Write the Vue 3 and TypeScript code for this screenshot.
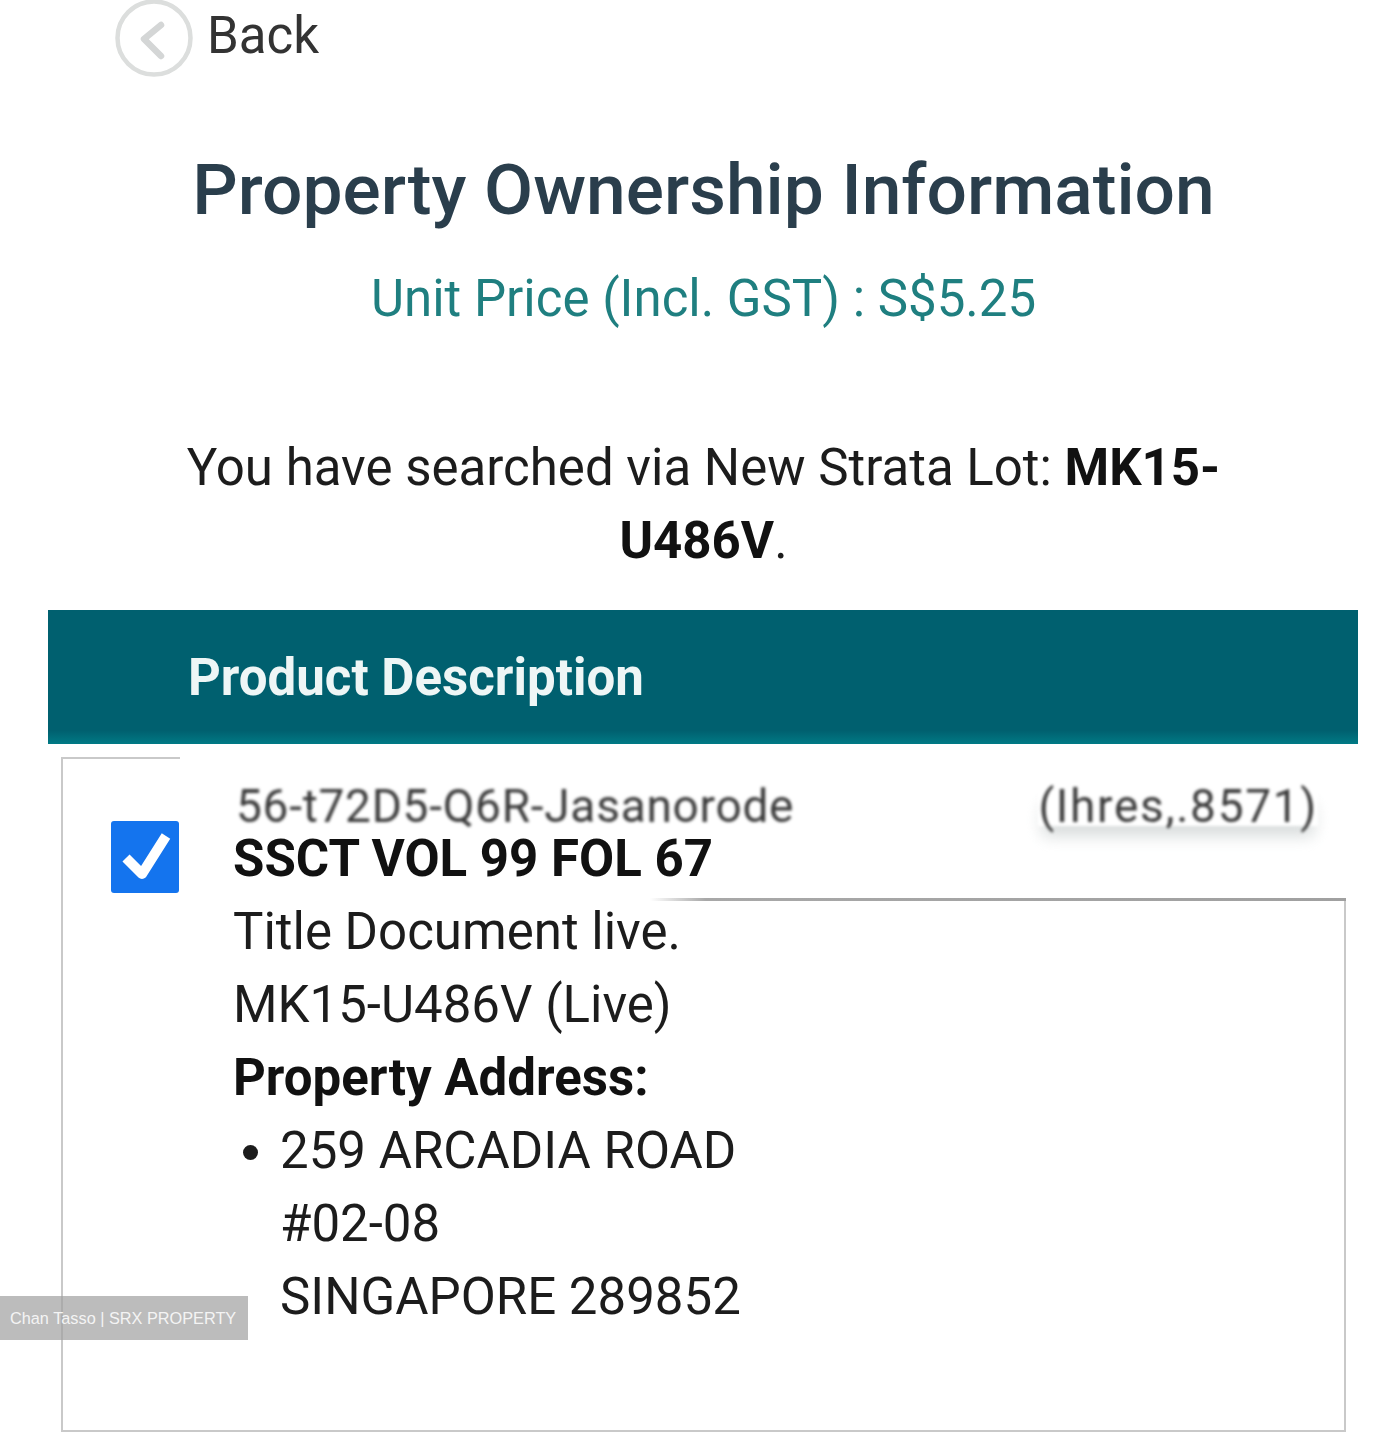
<script setup lang="ts">
const lines: string[] = ['Title Document live.', 'MK15-U486V (Live)']
const address: string[] = ['259 ARCADIA ROAD', '#02-08', 'SINGAPORE 289852']
</script>

<template>
  <div class="page">
    <div class="back">
      <svg class="back-icon" width="78" height="78" viewBox="0 0 78 78" fill="none">
        <circle cx="39" cy="38" r="36.5" stroke="#dcdedd" stroke-width="4.5" />
        <path d="M46 25 L29 39 L46 56" stroke="#d4d6d6" stroke-width="6.5" stroke-linecap="round" stroke-linejoin="round" />
      </svg>
      <span class="back-label">Back</span>
    </div>

    <h1 class="title">Property Ownership Information</h1>
    <p class="price">Unit Price (Incl. GST) : S$5.25</p>
    <p class="searched">You have searched via New Strata Lot: <b>MK15-<br />U486V</b>.</p>

    <div class="banner">Product Description</div>

    <div class="box">
      <div class="patch"></div>
      <div class="rule"></div>
      <div class="check">
        <svg width="68" height="72" viewBox="0 0 68 72" fill="none">
          <path d="M15 37 L31 53 L55 15" stroke="#fff" stroke-width="10" stroke-linejoin="round" />
        </svg>
      </div>
      <div class="content">
        <div class="blur-row">
          <span class="ref">56-t72D5-Q6R-Jasanorode</span>
          <span class="hits">(Ihres,.8571)</span>
        </div>
        <div class="line strong">SSCT VOL 99 FOL 67</div>
        <div v-for="l in lines" :key="l" class="line">{{ l }}</div>
        <div class="line strong">Property Address:</div>
        <ul class="address">
          <li>
            <div v-for="a in address" :key="a" class="line">{{ a }}</div>
          </li>
        </ul>
      </div>
    </div>

    <div class="watermark">Chan Tasso | SRX PROPERTY</div>
  </div>
</template>

<style>
html, body { margin: 0; background: #fff; }
</style>

<style scoped>
.page {
  position: relative;
  width: 1396px;
  height: 1440px;
  overflow: hidden;
  background: #fff;
  font-family: Roboto, "Liberation Sans", sans-serif;
  color: #1c1c1c;
}
.back {
  display: flex;
  align-items: center;
  gap: 15px;
  height: 78px;
  padding-left: 115px;
}
.back-icon { flex: none; filter: blur(0.6px); }
.back-label {
  font-size: 51px;
  line-height: 72px;
  margin-bottom: 6px;
  margin-left: -1px;
  color: #333;
}
.title {
  margin: 72px 0 0;
  padding-left: 11px;
  font-size: 71.3px;
  line-height: 80px;
  font-weight: 500;
  color: #2a3e4c;
  text-align: center;
}
.price {
  margin: 39px 0 0;
  padding-left: 11px;
  font-size: 51px;
  line-height: 60px;
  color: #1f7f80;
  text-align: center;
}
.searched {
  margin: 102px 0 0;
  padding-left: 11px;
  font-size: 51px;
  line-height: 73px;
  text-align: center;
}
.searched b { font-weight: 700; color: #111; }
.banner {
  margin: 33px 38px 0 48px;
  height: 134px;
  padding-left: 140px;
  display: flex;
  align-items: center;
  box-sizing: border-box;
  background: linear-gradient(#00606f 0%, #00606f 90%, #007a85 100%);
  color: #eef6f6;
  font-size: 51px;
  font-weight: 700;
}
.box {
  position: relative;
  display: flex;
  margin: 13px 0 0 61px;
  width: 1285px;
  height: 675px;
  box-sizing: border-box;
  border: 2px solid #c9c9c9;
}
.patch {
  position: absolute;
  left: 117px;
  top: -15px;
  right: -3px;
  height: 155px;
  background: #fff;
}
.rule {
  position: absolute;
  left: 587px;
  top: 139px;
  right: -2px;
  height: 3px;
  background: linear-gradient(90deg, #fff, #a8a8a8 8%, #a0a0a0);
}
.check {
  position: relative;
  flex: none;
  width: 68px;
  height: 72px;
  margin: 62px 0 0 48px;
  border-radius: 3px;
  background: #1474ee;
}
.content {
  position: relative;
  flex: 1;
  margin-left: 54px;
  padding-top: 31px;
}
.blur-row {
  display: flex;
  justify-content: space-between;
  align-items: center;
  height: 32px;
  padding-right: 26px;
  font-size: 46px;
  color: #3a3a3a;
}
.ref { filter: blur(1.4px); line-height: 40px; letter-spacing: 0.75px; margin-left: 3px; }
.hits {
  filter: blur(1.4px);
  line-height: 40px;
  letter-spacing: 1.7px;
  box-shadow: 0 14px 16px -4px #d8dcdc;
}
.line {
  font-size: 51px;
  line-height: 73px;
  white-space: nowrap;
}
.strong { font-weight: 700; color: #111; }
.address {
  margin: 0;
  padding: 0 0 0 47px;
  font-size: 48px;
}
.watermark {
  position: absolute;
  left: 0;
  top: 1296px;
  width: 248px;
  height: 44px;
  box-sizing: border-box;
  padding-left: 10px;
  background: rgba(160, 160, 160, 0.7);
  color: #f4f4f4;
  font-family: "Liberation Sans", Arial, sans-serif;
  font-size: 16.3px;
  line-height: 44px;
  white-space: nowrap;
}
</style>
